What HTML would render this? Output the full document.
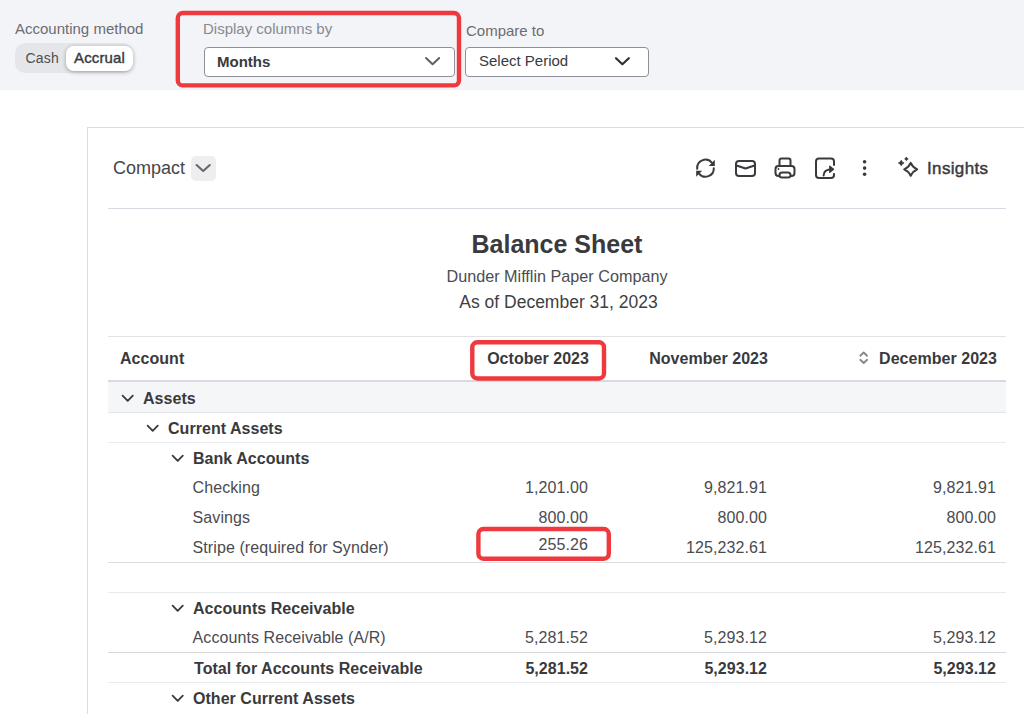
<!DOCTYPE html>
<html><head><meta charset="utf-8">
<style>
*{box-sizing:border-box;margin:0;padding:0}
html,body{width:1024px;height:714px;overflow:hidden;background:#fff;font-family:"Liberation Sans",sans-serif;color:#393a3d}
.a{position:absolute;white-space:nowrap;line-height:1}
#top{position:absolute;left:0;top:0;width:1024px;height:90px;background:#f3f4f7}
.lbl{font-size:15px;color:#6b6c72}
.dd{position:absolute;background:#fff;border:1px solid #8d9096;border-radius:4px}
.red{position:absolute;border:4px solid #e5363c;border-radius:6px}
#card{position:absolute;left:87px;top:127px;width:1000px;height:700px;border:1px solid #d9dce1;background:#fff}
.hr{position:absolute;left:108px;width:898px;height:1px;background:#e3e5e8}
.t{font-size:16px;color:#4a4b4f;letter-spacing:0.08px}
.t.b{color:#393a3d;letter-spacing:0.04px}
.b{font-weight:700}
.r{text-align:right}
</style></head><body>
<div id="top"></div>
<div class="a lbl" style="left:15px;top:21px">Accounting method</div>
<div style="position:absolute;left:15px;top:43px;width:118px;height:30px;background:#e5e6e9;border-radius:10px"></div>
<div style="position:absolute;left:66px;top:46px;width:67px;height:25px;background:#fff;border-radius:8px;box-shadow:0 1px 4px rgba(0,0,0,.32)"></div>
<div class="a" style="left:25.5px;top:50.8px;font-size:14px;letter-spacing:0.2px;color:#4d4e53">Cash</div>
<div class="a" style="left:74px;top:50px;font-size:15px;letter-spacing:0.15px;color:#393a3d;-webkit-text-stroke:0.4px #393a3d">Accrual</div>

<div class="a lbl" style="left:203px;top:21px;color:#878a90">Display columns by</div>
<div class="dd" style="left:204px;top:47px;width:251px;height:30px"></div>
<div class="a b" style="left:217px;top:54px;font-size:15px">Months</div>

<div class="a lbl" style="left:466px;top:23px">Compare to</div>
<div class="dd" style="left:465px;top:47px;width:184px;height:30px"></div>
<div class="a" style="left:479px;top:53px;font-size:15px">Select Period</div>

<div id="card"></div>
<div class="a" style="left:113px;top:159px;font-size:18px;color:#45464a">Compact</div>
<div style="position:absolute;left:191px;top:156px;width:25px;height:25px;background:#eeeef0;border-radius:5px"></div>
<div class="hr" style="top:208px;background:#d7dae0"></div>
<div class="a" style="left:927px;top:160px;font-size:17px;letter-spacing:0.35px;-webkit-text-stroke:0.45px #393a3d">Insights</div>

<div class="a b" style="left:0;width:1114px;text-align:center;top:232px;font-size:25px">Balance Sheet</div>
<div class="a" style="left:0;width:1114px;text-align:center;top:268.2px;font-size:16.2px;color:#4b4d51">Dunder Mifflin Paper Company</div>
<div class="a" style="left:0;width:1114px;text-align:center;top:294.2px;font-size:17.5px;padding-left:3px;color:#3f4044">As of December 31, 2023</div>

<!-- table -->
<div class="hr" style="top:336px;background:#e1e3e6"></div>
<div class="a t b" style="left:120px;top:351px">Account</div>
<div class="a t b r" style="right:435px;top:351px">October 2023</div>
<div class="a t b r" style="right:256px;top:351px">November 2023</div>
<div class="a t b r" style="right:27px;top:351px">December 2023</div>
<div class="hr" style="top:380px;height:2px;background:#d7dae0"></div>
<div class="hr" style="top:382px;height:31px;background:#f5f6f8"></div>
<div class="hr" style="top:412px"></div>
<div class="a t b" style="left:143px;top:391px">Assets</div>
<div class="a t b" style="left:168px;top:421px">Current Assets</div>
<div class="hr" style="top:442px;background:#eaebee"></div>
<div class="a t b" style="left:193px;top:451px">Bank Accounts</div>

<div class="a t" style="left:192.6px;top:480px">Checking</div>
<div class="a t r" style="right:436px;top:480px">1,201.00</div>
<div class="a t r" style="right:257px;top:480px">9,821.91</div>
<div class="a t r" style="right:28px;top:480px">9,821.91</div>

<div class="a t" style="left:192.6px;top:510px">Savings</div>
<div class="a t r" style="right:436px;top:510px">800.00</div>
<div class="a t r" style="right:257px;top:510px">800.00</div>
<div class="a t r" style="right:28px;top:510px">800.00</div>

<div class="a t" style="left:192.6px;top:540px">Stripe (required for Synder)</div>
<div class="a t r" style="right:436px;top:537px">255.26</div>
<div class="a t r" style="right:257px;top:540px">125,232.61</div>
<div class="a t r" style="right:28px;top:540px">125,232.61</div>
<div class="hr" style="top:562px;background:#dcdde0"></div>
<div class="hr" style="top:592px;background:#e9eaec"></div>

<div class="a t b" style="left:193px;top:601px">Accounts Receivable</div>
<div class="a t" style="left:192.6px;top:630px">Accounts Receivable (A/R)</div>
<div class="a t r" style="right:436px;top:630px">5,281.52</div>
<div class="a t r" style="right:257px;top:630px">5,293.12</div>
<div class="a t r" style="right:28px;top:630px">5,293.12</div>
<div class="hr" style="top:652px;background:#d6d7da"></div>
<div class="a t b" style="left:194px;top:661px">Total for Accounts Receivable</div>
<div class="a t b r" style="right:436px;top:661px">5,281.52</div>
<div class="a t b r" style="right:257px;top:661px">5,293.12</div>
<div class="a t b r" style="right:28px;top:661px">5,293.12</div>
<div class="hr" style="top:682px;background:#e9eaec"></div>
<div class="a t b" style="left:193px;top:691px">Other Current Assets</div>


<svg style="position:absolute;left:0;top:0" width="1024" height="714" viewBox="0 0 1024 714">
<g fill="none" stroke="#ef393e" stroke-width="4.4">
<rect x="177.8" y="13" width="281.2" height="72.4" rx="5"/>
<rect x="472.3" y="342.3" width="131.7" height="36.2" rx="5"/>
<rect x="478.4" y="529" width="130.4" height="29.7" rx="5"/>
</g>
<g fill="none" stroke="#5c5e63" stroke-width="1.9" stroke-linecap="round" stroke-linejoin="round">
<path d="M426,58 L432.6,64.3 L439.2,58"/>
</g>
<g fill="none" stroke="#2f3033" stroke-width="2.2" stroke-linecap="round" stroke-linejoin="round">
<path d="M616,58.2 L622.4,64.2 L628.8,58.2"/>
</g>
<g fill="none" stroke="#66686d" stroke-width="2.1" stroke-linecap="round" stroke-linejoin="round">
<path d="M196.6,165 L203.2,171 L209.8,165"/>
</g>
<g fill="none" stroke="#393a3d" stroke-width="2" stroke-linecap="round" stroke-linejoin="round">
<!-- refresh -->
<path d="M697.2,168.8 A8.3,8.3 0 0 1 711.8,162.6"/>
<path d="M713.8,168.2 A8.3,8.3 0 0 1 699.2,173.8"/>
<!-- envelope -->
<rect x="736" y="161" width="19" height="15" rx="3"/>
<path d="M736.5,165.5 L745.5,168.5 L754.5,165.5"/>
<!-- printer -->
<rect x="779.5" y="158.5" width="11" height="8" rx="2"/>
<rect x="775.5" y="166" width="19" height="10" rx="3" fill="#fff"/>
<rect x="779.5" y="172.5" width="11" height="5" rx="2.5" fill="#fff"/>
<!-- export -->
<path d="M834,165 V161.5 A3,3 0 0 0 831,158.5 H819 A3,3 0 0 0 816,161.5 V175 A3,3 0 0 0 819,178 H831 A3,3 0 0 0 834,175 V174"/>
<path d="M823.6,175.5 C823.6,171.5 826,169.2 832.5,169.2"/>
<path d="M829.8,166.2 L833.4,169.2 L829.8,172.2 Z" fill="#393a3d" stroke-width="1.4"/>
</g>
<g fill="#393a3d">
<path d="M714.8,159.8 L714.8,165.9 L708.8,165.9 Z"/>
<path d="M696.2,176.8 L696.2,170.7 L702.2,170.7 Z"/>
<circle cx="778.5" cy="169" r="0.9"/>
<circle cx="864.6" cy="161.8" r="1.8"/>
<circle cx="864.6" cy="168.1" r="1.8"/>
<circle cx="864.6" cy="174.3" r="1.8"/>
<path d="M901.2,160.3 Q901.9,162.3 904,163 Q901.9,163.7 901.2,165.7 Q900.5,163.7 898.4,163 Q900.5,162.3 901.2,160.3Z" stroke="#393a3d" stroke-width="0.8" stroke-linejoin="round"/>
<path d="M906.4,157.1 Q906.9,158.4 908.2,158.9 Q906.9,159.4 906.4,160.7 Q905.9,159.4 904.6,158.9 Q905.9,158.4 906.4,157.1Z" stroke="#393a3d" stroke-width="0.7" stroke-linejoin="round"/>
</g>
<path d="M910.7,162.8 Q912.7,167.3 917.2,169.3 Q912.7,171.3 910.7,175.8 Q908.7,171.3 904.2,169.3 Q908.7,167.3 910.7,162.8Z" fill="none" stroke="#393a3d" stroke-width="2" stroke-linejoin="round"/>
<g fill="none" stroke="#393a3d" stroke-width="1.8" stroke-linecap="round" stroke-linejoin="round">
<path d="M122.6,395.6 L127.7,400.8 L132.8,395.6"/>
<path d="M147.6,425.6 L152.7,430.8 L157.8,425.6"/>
<path d="M172.6,455.6 L177.7,460.8 L182.8,455.6"/>
<path d="M172.6,605.6 L177.7,610.8 L182.8,605.6"/>
<path d="M172.6,695.6 L177.7,700.8 L182.8,695.6"/>
</g>
<g fill="none" stroke="#85888e" stroke-width="1.9" stroke-linecap="round" stroke-linejoin="round">
<path d="M860.3,355.7 L863.7,352.5 L867.1,355.7"/>
<path d="M860.3,359.8 L863.7,363 L867.1,359.8"/>
</g>
</svg>
</body></html>
